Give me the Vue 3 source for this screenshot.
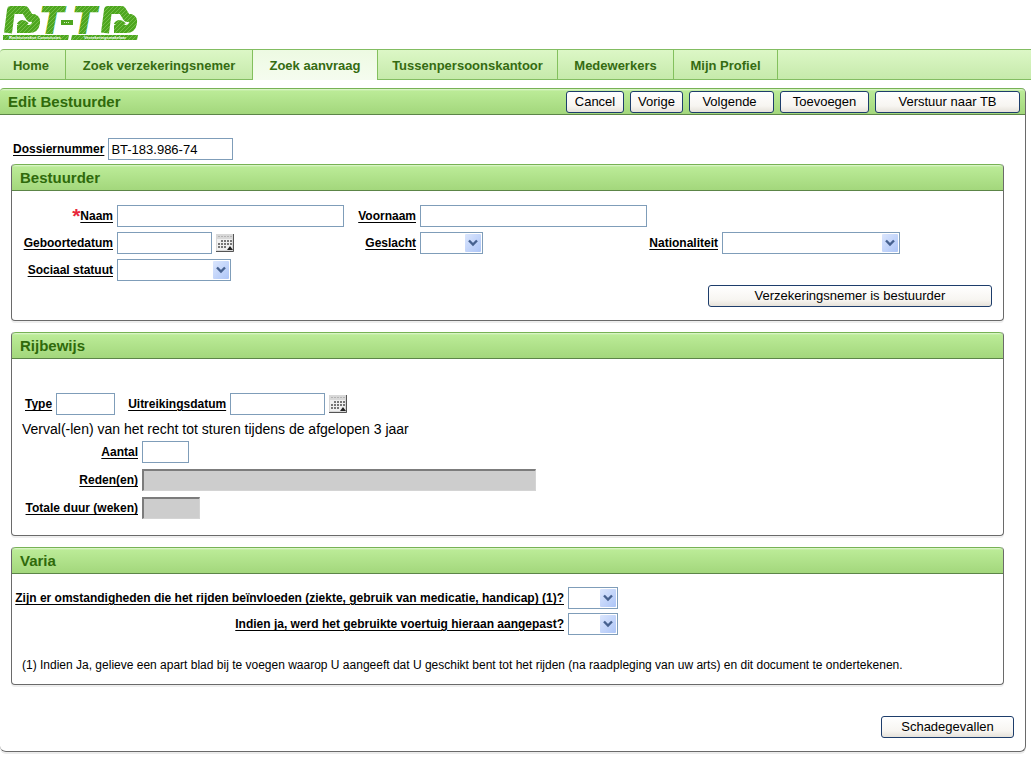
<script setup>
import { reactive } from 'vue'

const tabs = [
  { label: 'Home', size: 'home' },
  { label: 'Zoek verzekeringsnemer', size: 'insured' },
  { label: 'Zoek aanvraag', size: 'request', active: true },
  { label: 'Tussenpersoonskantoor', size: 'office' },
  { label: 'Medewerkers', size: 'staff' },
  { label: 'Mijn Profiel', size: 'profile' },
]

const form = reactive({
  dossier: 'BT-183.986-74',
  naam: '',
  voornaam: '',
  geboortedatum: '',
  geslacht: '',
  nationaliteit: '',
  statuut: '',
  type: '',
  uitreiking: '',
  aantal: '',
  reden: '',
  duur: '',
  omstandigheden: '',
  aangepast: '',
})
</script>

<template>
  <div class="page">
    <svg class="symbols" aria-hidden="true">
      <symbol id="chevron" viewBox="0 0 16 18">
        <rect width="16" height="18" rx="1" fill="url(#arrow-fill)" />
        <path d="M4 6.5 L8 10.5 L12 6.5" fill="none" stroke="#46618f" stroke-width="2.4" />
      </symbol>
      <symbol id="calendar" viewBox="0 0 18 18">
        <rect width="18" height="18" fill="#d8d8d8" />
        <path d="M0 17.5H17.5V0" fill="none" stroke="#555" />
        <path d="M2 2.5h14" stroke="#b4b4b4" stroke-dasharray="2 1" />
        <rect x="1" y="5" width="15" height="11" fill="#f0f0f0" />
        <path d="M5 7h11M2 10h14M2 13h9" stroke="#777" stroke-width="2" stroke-dasharray="2 1" />
        <path d="M11 16l3-4 3 4z" fill="#222" />
      </symbol>
      <defs>
        <linearGradient id="arrow-fill" x1="0" y1="0" x2="1" y2="1">
          <stop offset="0" stop-color="#dbe6fd" />
          <stop offset="1" stop-color="#adc5f7" />
        </linearGradient>
      </defs>
    </svg>

    <header class="brand">
      <svg class="logo" width="142" height="44" viewBox="0 0 142 44" role="img" aria-label="BT-TB">
        <defs>
          <pattern id="grain" width="4" height="4" patternUnits="userSpaceOnUse">
            <rect width="4" height="4" fill="#4ea61f" />
            <path d="M0 4L4 0" stroke="#74bf47" stroke-width="1" />
          </pattern>
        </defs>
        <g fill="none" stroke="url(#grain)" stroke-width="8" stroke-linejoin="round">
          <path d="M8 33L11 10H25L30 18Q37 17 36 23Q35 29 29 29H17" />
          <path d="M19 25Q22 20 27 25" stroke-width="5" />
          <path d="M105 33L108 10H122L127 18Q134 17 133 23Q132 29 126 29H114" />
          <path d="M116 25Q119 20 124 25" stroke-width="5" />
        </g>
        <g class="logo-letter">
          <text x="40" y="33">T</text>
          <text x="73" y="33">T</text>
        </g>
        <rect x="61" y="20" width="12" height="5" fill="#4ea61f" />
        <path d="M64 22.500h6" stroke="#d5efc4" stroke-dasharray="1 1" />
        <path d="M3 35h66l-1 5H3zM72 35h66l-1 5H71z" fill="url(#grain)" />
        <g class="logo-caption">
          <text x="9" y="39">Rechtstreekse Commissies</text>
          <text x="84" y="39">Verzekeringsmakelaar</text>
        </g>
      </svg>
    </header>

    <nav class="tabs">
      <a v-for="tab in tabs" :key="tab.label" href="#" :class="['tab', tab.size, { active: tab.active }]">{{ tab.label }}</a>
    </nav>

    <main class="panel">
      <div class="bar">
        <h1>Edit Bestuurder</h1>
        <div class="actions">
          <button type="button" class="w-s">Cancel</button>
          <button type="button" class="w-xs">Vorige</button>
          <button type="button" class="w-m">Volgende</button>
          <button type="button" class="w-l">Toevoegen</button>
          <button type="button" class="w-xl">Verstuur naar TB</button>
        </div>
      </div>

      <form class="content" @submit.prevent>
        <div class="line dossier">
          <label for="dossier">Dossiernummer</label>
          <input id="dossier" v-model="form.dossier" type="text" />
        </div>

        <section class="box">
          <h2 class="bar">Bestuurder</h2>
          <div class="driver">
            <label for="naam"><b class="required">*</b><span>Naam</span></label>
            <input id="naam" v-model="form.naam" type="text" />
            <label for="voornaam">Voornaam</label>
            <input id="voornaam" v-model="form.voornaam" type="text" />

            <label class="first" for="geboortedatum">Geboortedatum</label>
            <div class="line">
              <input id="geboortedatum" v-model="form.geboortedatum" class="date" type="text" />
              <button type="button" class="calendar" aria-label="Kalender"><svg><use href="#calendar" /></svg></button>
            </div>
            <label for="geslacht">Geslacht</label>
            <span class="select sex">
              <select id="geslacht" v-model="form.geslacht"><option value=""></option></select>
              <svg><use href="#chevron" /></svg>
            </span>
            <label for="nationaliteit">Nationaliteit</label>
            <span class="select">
              <select id="nationaliteit" v-model="form.nationaliteit"><option value=""></option></select>
              <svg><use href="#chevron" /></svg>
            </span>

            <label class="first" for="statuut">Sociaal statuut</label>
            <span class="select status">
              <select id="statuut" v-model="form.statuut"><option value=""></option></select>
              <svg><use href="#chevron" /></svg>
            </span>
          </div>
          <div class="box-action">
            <button type="button" class="w-wide">Verzekeringsnemer is bestuurder</button>
          </div>
        </section>

        <section class="box">
          <h2 class="bar">Rijbewijs</h2>
          <div class="line licence">
            <label for="type">Type</label>
            <input id="type" v-model="form.type" class="type" type="text" />
            <label class="issued" for="uitreiking">Uitreikingsdatum</label>
            <input id="uitreiking" v-model="form.uitreiking" class="date" type="text" />
            <button type="button" class="calendar" aria-label="Kalender"><svg><use href="#calendar" /></svg></button>
          </div>
          <p class="lead">Verval(-len) van het recht tot sturen tijdens de afgelopen 3 jaar</p>
          <div class="lapse">
            <label for="aantal">Aantal</label>
            <input id="aantal" v-model="form.aantal" class="count" type="text" />
            <label for="reden">Reden(en)</label>
            <input id="reden" v-model="form.reden" class="reason" type="text" disabled />
            <label for="duur">Totale duur (weken)</label>
            <input id="duur" v-model="form.duur" class="weeks" type="text" disabled />
          </div>
        </section>

        <section class="box">
          <h2 class="bar">Varia</h2>
          <div class="misc">
            <label for="omstandigheden">Zijn er omstandigheden die het rijden beïnvloeden (ziekte, gebruik van medicatie, handicap) (1)?</label>
            <span class="select">
              <select id="omstandigheden" v-model="form.omstandigheden"><option value=""></option></select>
              <svg><use href="#chevron" /></svg>
            </span>
            <label for="aangepast">Indien ja, werd het gebruikte voertuig hieraan aangepast?</label>
            <span class="select">
              <select id="aangepast" v-model="form.aangepast"><option value=""></option></select>
              <svg><use href="#chevron" /></svg>
            </span>
          </div>
          <p class="note">(1) Indien Ja, gelieve een apart blad bij te voegen waarop U aangeeft dat U geschikt bent tot het rijden (na raadpleging van uw arts) en dit document te ondertekenen.</p>
        </section>

        <div class="next">
          <button type="button" class="w-next">Schadegevallen</button>
        </div>
      </form>
    </main>
  </div>
</template>

<style>
body {
  background: #fff;
}
</style>

<style scoped>
.page,
.page * {
  box-sizing: border-box;
}
.page {
  font-family: "Liberation Sans", Arial, sans-serif;
  font-size: 12px;
  line-height: 16px;
  color: #000;
}
.symbols {
  position: absolute;
  width: 0;
  height: 0;
}
.brand {
  height: 49px;
}
.logo {
  display: block;
}
.logo-letter {
  font-size: 37px;
  font-weight: bold;
  font-style: italic;
  fill: url(#grain);
  stroke: url(#grain);
  stroke-width: 2;
}
.logo-caption {
  font-size: 4px;
  font-weight: bold;
  fill: #fff;
}

.tabs {
  display: flex;
  height: 31px;
  border-top: 1px solid #83bd62;
  border-bottom: 1px solid #83bd62;
  border-top-left-radius: 4px;
  background: linear-gradient(#dcf7c6, #c6eaab);
}
.tab {
  height: 29px;
  border-right: 1px solid #83c05d;
  line-height: 31px;
  text-align: center;
  font-size: 13px;
  font-weight: bold;
  color: #356b12;
  text-decoration: none;
  white-space: nowrap;
}
.tab.active {
  height: 30px;
  background: linear-gradient(#edfae2, #f5fcef);
}
.home { width: 66px; padding-right: 3px; }
.insured { width: 187px; }
.request { width: 125px; }
.office { width: 180px; }
.staff { width: 116px; }
.profile { width: 104px; }

.panel {
  margin: 8px 5px 5px 0;
  border: 1px solid #6a6a6a;
  border-top: 0;
  border-left: 0;
  border-radius: 4px 5px 6px 6px;
  box-shadow: 0 2px 0 #ececec;
}
.bar {
  display: flex;
  align-items: center;
  justify-content: space-between;
  height: 27px;
  margin: 0;
  padding: 0 5px 0 8px;
  border-top: 1px solid #77b255;
  border-bottom: 1px solid #5c8548;
  border-radius: 4px 4px 0 0;
  background: linear-gradient(#e2f7d3 0, #bbeb97 2px, #a3d77c 100%);
  font-size: 15px;
  font-weight: bold;
  color: #2f6a0b;
}
h1 {
  margin: 0;
  font-size: 15px;
}
.actions {
  display: flex;
  gap: 6px;
}

button {
  height: 22px;
  padding: 0;
  border: 1px solid #1d3d6b;
  border-radius: 3px;
  background: linear-gradient(#fff, #f7f5f1 70%, #e6e2da);
  font-family: inherit;
  font-size: 13px;
  line-height: 16px;
  color: #000;
}
.w-xs { width: 53px; }
.w-s { width: 58px; }
.w-m { width: 85px; padding-right: 4px; }
.w-l { width: 89px; }
.w-xl { width: 145px; }
.w-wide { width: 284px; }
.w-next { width: 133px; }

label {
  font-weight: bold;
  text-align: right;
  white-space: nowrap;
  text-decoration: underline;
  text-underline-offset: 2px;
}
input,
select {
  width: 100%;
  height: 22px;
  margin: 0;
  padding: 0 2px;
  border: 1px solid #7f9db9;
  border-radius: 0;
  background: #fff;
  font-family: inherit;
  font-size: 13px;
  color: #000;
}
input:disabled {
  border-width: 2px 1px 1px 2px;
  border-style: solid;
  border-color: #7c7c7c #d4d4d4 #d4d4d4 #7c7c7c;
  background: #cdcdcd;
}
.select {
  position: relative;
  display: block;
  height: 22px;
}
select {
  appearance: none;
  display: block;
}
.select svg {
  position: absolute;
  top: 2px;
  right: 2px;
  width: 16px;
  height: 18px;
  pointer-events: none;
}
.line {
  display: flex;
  align-items: center;
  gap: 4px;
}
.calendar {
  width: 18px;
  height: 18px;
  border: 0;
  border-radius: 0;
  background: none;
}
.calendar svg {
  display: block;
  width: 18px;
  height: 18px;
}
.date { width: 95px; }

.content {
  padding: 23px 21px 13px 11px;
}
.dossier {
  padding-left: 2px;
  margin-bottom: 4px;
}
.dossier input {
  width: 125px;
}
.box {
  margin-bottom: 11px;
  border: 1px solid #6a6a6a;
  border-top: 0;
  border-radius: 4px;
  box-shadow: 0 2px 0 #eee;
}
.driver {
  display: grid;
  grid-template-columns: 101px 227px 68px 227px 67px 178px;
  gap: 5px 4px;
  align-items: center;
  padding-top: 14px;
}
.driver .first {
  grid-column: 1;
}
.driver label {
  justify-self: end;
}
.sex { width: 63px; }
.status { width: 114px; }
label:has(.required) {
  text-decoration: none;
}
label:has(.required) span {
  text-decoration: underline;
}
.required {
  font-size: 21px;
  line-height: 12px;
  vertical-align: -3px;
  color: #e8283c;
}
.box-action {
  display: flex;
  justify-content: flex-end;
  padding: 4px 11px 13px;
}
.licence {
  padding: 34px 13px 0;
}
.type { width: 59px; }
.issued { margin-left: 9px; }
.lead {
  margin: 6px 10px 4px;
  font-size: 14px;
  line-height: 16px;
}
.lapse {
  display: grid;
  grid-template-columns: 126px 1fr;
  gap: 6px 4px;
  align-items: center;
  padding-bottom: 16px;
}
.lapse .count { width: 47px; }
.lapse .reason { width: 394px; }
.lapse .weeks { width: 58px; }
.misc {
  display: grid;
  grid-template-columns: 552px 50px;
  gap: 4px;
  align-items: center;
  padding-top: 13px;
}
.note {
  margin: 22px 10px 11px;
}
.next {
  display: flex;
  justify-content: flex-end;
  margin: 31px -10px 0 0;
}
</style>
